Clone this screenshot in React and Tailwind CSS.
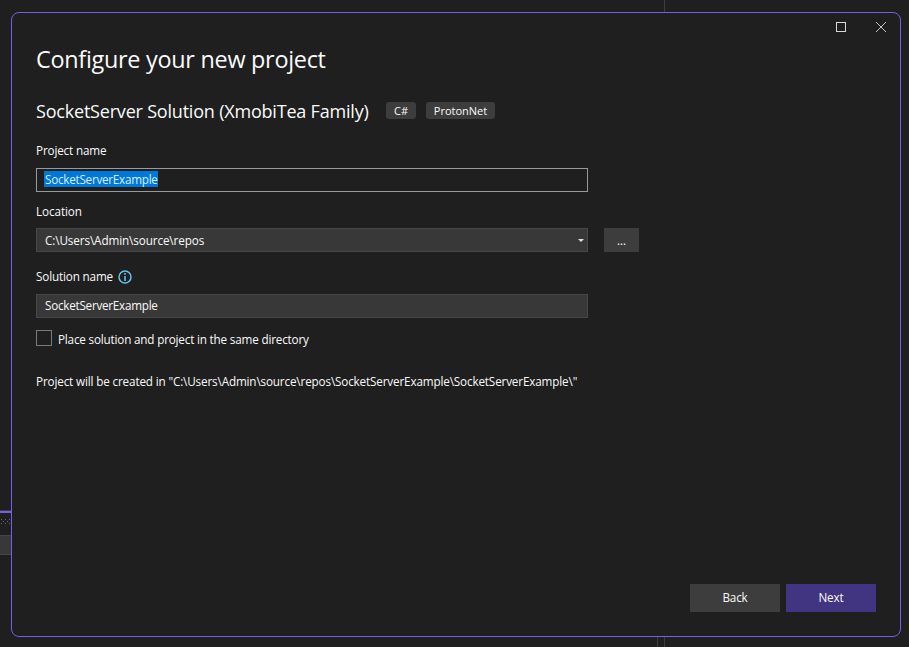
function TopStrip() {
  return (
    <div className="flex h-[12px] shrink-0 pl-[664px]">
      <div className="w-px bg-[#3d3d3d]" />
    </div>
  );
}

function BottomStrip() {
  return (
    <div className="flex h-[10px] shrink-0 gap-[6px] pl-[657px]">
      <div className="w-px bg-[#3d3d3d]" />
      <div className="w-px bg-[#3d3d3d]" />
    </div>
  );
}

function LeftStrip() {
  return (
    <div className="flex w-[11px] shrink-0 flex-col pt-[498px]">
      <div className="h-px bg-[#3d3d3d]" />
      <div className="h-[2px] bg-[#7160e8]" />
      <svg className="mt-[6px] block" width="11" height="5" fill="#68686a" shapeRendering="crispEdges">
        {[1, 5, 9].map((x) => (
          <g key={x}>
            <rect x={x} y="0" width="1" height="1" />
            <rect x={x} y="4" width="1" height="1" />
          </g>
        ))}
        <rect x="3" y="2" width="1" height="1" />
        <rect x="7" y="2" width="1" height="1" />
      </svg>
      <div className="mt-[11px] h-[20px] border-y border-[#464646] bg-[#383838]" />
    </div>
  );
}

function InfoIcon() {
  return (
    <svg className="ml-[5px] block" width="14" height="14" viewBox="0 0 14 14" fill="none">
      <circle cx="7" cy="7" r="6" stroke="#63c3ea" strokeWidth="1.5" />
      <path d="M6 3h2v1.7H6zM6 6h2v5H6z" fill="#559fbd" />
    </svg>
  );
}

export default function App() {
  return (
    <div className="flex h-[647px] w-[909px] flex-col overflow-hidden bg-[#1f1f1f] font-['Open_Sans','Noto_Sans',sans-serif] text-[11.7px] leading-4 tracking-[-0.15px] whitespace-nowrap text-[#fafafa]">
      <TopStrip />
      <div className="flex h-[625px] shrink-0">
        <LeftStrip />
        <main className="flex w-[890px] flex-col rounded-[8px] border border-[#7160e8] bg-[#1f1f1f] pl-[24px]">
          <div className="flex h-[28px] shrink-0 items-center justify-end gap-[29px] pr-[13px]">
            <button aria-label="Maximize">
              <svg className="block" width="11" height="11" fill="none" stroke="#d8d8d8">
                <rect x="1.5" y="0.5" width="9" height="9" />
              </svg>
            </button>
            <button aria-label="Close">
              <svg className="block" width="12" height="12" fill="none" stroke="#c4c4c4">
                <path d="M1 1l10 10M11 1L1 11" />
              </svg>
            </button>
          </div>
          <h1 className="mt-[2px] h-[32px] text-[23.4px] leading-8 tracking-[-0.27px]">Configure your new project</h1>
          <div className="mt-[22px] flex h-[28px] items-center">
            <h2 className="w-[350px] text-[18px] leading-7 tracking-[-0.2px]">SocketServer Solution (XmobiTea Family)</h2>
            <span className="mt-[-2px] flex h-[17px] w-[30px] items-center justify-center rounded-[3px] bg-[#3d3d3d] pt-[2px] text-[11px] tracking-normal">C#</span>
            <span className="mt-[-2px] ml-[10px] flex h-[17px] w-[69px] items-center justify-center rounded-[3px] bg-[#3d3d3d] pt-[2px] text-[11px] tracking-normal">ProtonNet</span>
          </div>
          <label className="mt-[17px] h-4">Project name</label>
          <div className="mt-[10px] flex h-[24px] w-[552px] items-center border border-[#999] pl-[7px]">
            <span className="mt-[-2px] w-[114px] bg-[#0078d7] pl-px tracking-[-0.25px] text-[#d8efff]">SocketServerExample</span>
          </div>
          <label className="mt-[11px] h-4 tracking-[-0.08px]">Location</label>
          <div className="mt-[9px] flex h-[24px]">
            <div className="flex w-[552px] items-center justify-between border border-[#464646] bg-[#383838] pr-[3px] pl-[8px]">
              <span className="tracking-[-0.1px]">{"C:\\Users\\Admin\\source\\repos"}</span>
              <svg className="block" width="6" height="3" fill="#e0e0e0">
                <path d="M0 0h6L3 3z" />
              </svg>
            </div>
            <button className="ml-[16px] w-[35px] bg-[#3d3d3d]">...</button>
          </div>
          <div className="mt-[17px] flex h-4 items-center">
            <label className="mt-[-2px]">Solution name</label>
            <InfoIcon />
          </div>
          <div className="mt-[9px] flex h-[24px] w-[552px] items-center border border-[#464646] bg-[#383838] pl-[8px]">
            <span className="mt-[-2px] tracking-[-0.25px]">SocketServerExample</span>
          </div>
          <div className="mt-[12px] flex h-[16px]">
            <div className="size-[16px] border border-[#7a7a7a]" />
            <span className="mt-px ml-[6px] tracking-[-0.18px]">Place solution and project in the same directory</span>
          </div>
          <p className="mt-[27px] h-4 tracking-[-0.145px]">{'Project will be created in "C:\\Users\\Admin\\source\\repos\\SocketServerExample\\SocketServerExample\\"'}</p>
          <div className="mt-auto mb-[24px] flex h-[28px] shrink-0 justify-end gap-[6px] pr-[24px]">
            <button className="w-[90px] bg-[#3d3d3d] pb-[2px]">Back</button>
            <button className="w-[90px] bg-[#413480] pb-[2px]">Next</button>
          </div>
        </main>
      </div>
      <BottomStrip />
    </div>
  );
}
